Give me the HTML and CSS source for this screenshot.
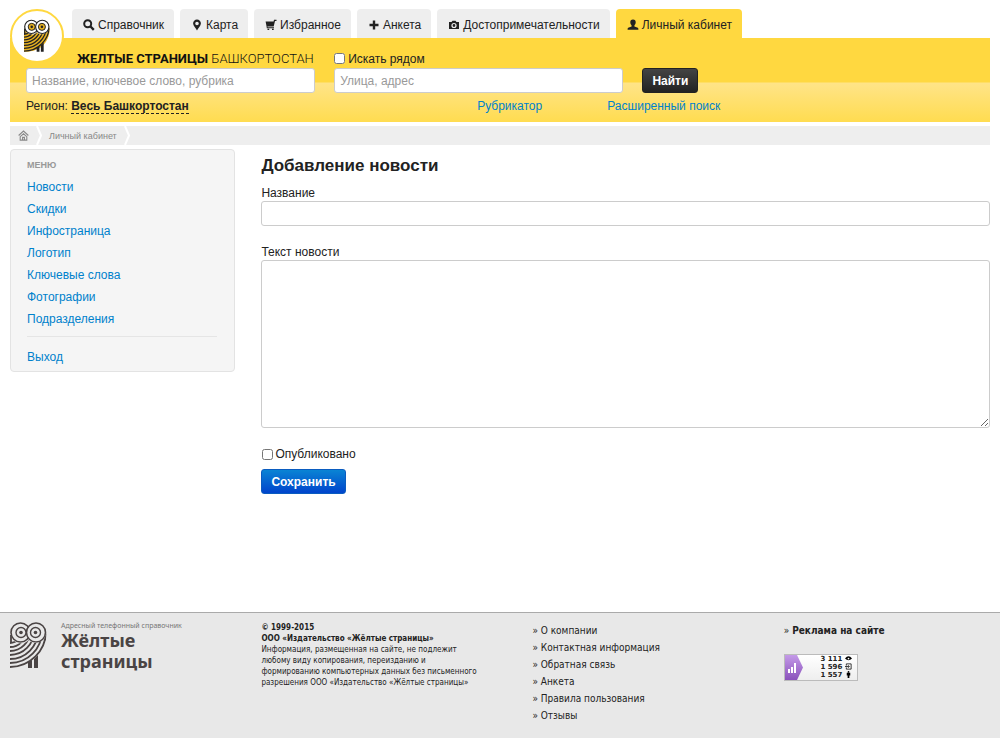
FILE: index.html
```html
<!DOCTYPE html>
<html lang="ru">
<head>
<meta charset="utf-8">
<meta name="viewport" content="width=device-width, initial-scale=1">
<title>Добавление новости — Жёлтые страницы</title>
<link rel="stylesheet" href="styles.css">
</head>
<body>
<svg class="defs" aria-hidden="true">
  <defs>
    <clipPath id="owl-body"><path d="M0 13C3 22 14 24 18.500 18C24 24 34 21 36.500 11C37 29 27 46 0 47Z"/></clipPath>
    <symbol id="owl" viewBox="0 0 37 47">
      <path class="owl-fill" d="M0 13C3 22 14 24 18.500 18C24 24 34 21 36.500 11C37 29 27 46 0 46Z"/>
      <path class="owl-leg" d="M18 40l4-2v8h-4zM24 37l4-4v13h-4z"/>
      <g class="owl-line" clip-path="url(#owl-body)">
        <circle cx="0" cy="9" r="12"/><circle cx="0" cy="9" r="16"/><circle cx="0" cy="9" r="20"/>
        <circle cx="0" cy="9" r="24"/><circle cx="0" cy="9" r="28"/>
        <circle cx="0" cy="9" r="32"/><circle cx="0" cy="9" r="36"/>
      </g>
      <path class="owl-line" d="M1 13V21"/>
      <g class="owl-eye"><circle cx="10.500" cy="10.500" r="9.500"/><circle cx="26" cy="10.500" r="9.500"/></g>
      <g class="owl-iris"><circle cx="11" cy="10.500" r="5"/><circle cx="25.500" cy="10.500" r="5"/></g>
      <g class="owl-pupil"><circle cx="11" cy="10.500" r="1.800"/><circle cx="25.500" cy="10.500" r="1.800"/></g>
    </symbol>
  </defs>
</svg>

<div class="page">
  <header class="header">
    <a class="badge" href="#" aria-label="Жёлтые страницы"><svg class="owl owl-color"><use href="#owl"/></svg></a>
    <nav class="tabs">
      <a class="tab" href="#"><svg class="icon" viewBox="0 0 12 12"><circle cx="4.700" cy="4.700" r="3.500" fill="none" stroke="currentColor" stroke-width="2"/><path d="M7.500 7.500l3.300 3.300" stroke="currentColor" stroke-width="2.400"/></svg>Справочник</a>
      <a class="tab" href="#"><svg class="icon" viewBox="0 0 12 12"><path fill="currentColor" fill-rule="evenodd" d="M6 .5a3.900 3.900 0 0 0-3.900 4C2.100 7 5 9 6 11.500 7 9 9.900 7 9.900 4.500A3.900 3.900 0 0 0 6 .5zm0 2.200a1.800 1.800 0 1 1 0 3.600A1.800 1.800 0 0 1 6 2.700z"/></svg>Карта</a>
      <a class="tab" href="#"><svg class="icon" viewBox="0 0 12 12"><path fill="currentColor" d="M11.500.8v1.100H10L8.700 7.400H2.400L2.600 8.200H9v1H1.800L1.500 7 .6 2.400h8L9 .8zM2.500 9.800h1.700V11H2.500zM7 9.800h1.700V11H7z"/></svg>Избранное</a>
      <a class="tab" href="#"><svg class="icon" viewBox="0 0 12 12"><path d="M6 1.500v9M1.500 6h9" stroke="currentColor" stroke-width="2.400"/></svg>Анкета</a>
      <a class="tab" href="#"><svg class="icon" viewBox="0 0 12 12"><path fill="currentColor" fill-rule="evenodd" d="M1 3h2.500l1-1.300h3L8.500 3H11v7H1zm5 .9a2.600 2.600 0 1 0 0 5.200 2.600 2.600 0 0 0 0-5.200zm0 1.200a1.400 1.400 0 1 1 0 2.800 1.400 1.400 0 0 1 0-2.800z"/></svg>Достопримечательности</a>
      <a class="tab tab-active" href="#"><svg class="icon" viewBox="0 0 12 12"><path fill="currentColor" d="M6 .6c1.900 0 2.800 1.200 2.700 2.900-.1 1.300-.7 2.200-1.300 2.900v1l3.400 1.300c.5.300.6 1 .6 2H.6c0-1 .1-1.700.6-2l3.400-1.300v-1C4 5.700 3.400 4.800 3.300 3.500 3.200 1.800 4.100.6 6 .6z"/></svg>Личный кабинет</a>
    </nav>
    <form class="search">
      <div class="search-grid">
        <div class="brand"><b>ЖЕЛТЫЕ СТРАНИЦЫ</b> БАШКОРТОСТАН</div>
        <label class="near"><input class="check" type="checkbox">Искать рядом</label>
        <span></span>
        <input class="field" type="text" aria-label="Что искать" placeholder="Название, ключевое слово, рубрика">
        <input class="field" type="text" aria-label="Где искать" placeholder="Улица, адрес">
        <button class="btn btn-dark" type="submit">Найти</button>
      </div>
      <div class="search-links">
        <span>Регион: <a class="region" href="#">Весь Башкортостан</a></span>
        <a href="#">Рубрикатор</a>
        <a href="#">Расширенный поиск</a>
      </div>
    </form>
  </header>

  <nav class="crumbs" aria-label="Путь">
    <a class="crumb crumb-home" href="#" aria-label="Главная"><svg class="icon-home" viewBox="0 0 12 12"><path d="M.7 6L6 1.200 11.300 6M2.400 7.300V11h7.200V7.300L6 4.200zM5 11V8h2v3" fill="none" stroke="currentColor" stroke-width="1.200"/></svg></a>
    <svg class="sep" viewBox="0 0 6 19"><path d="M1 0l4 9.500L1 19" fill="none" stroke="#fff" stroke-width="2"/></svg>
    <a class="crumb" href="#">Личный кабинет</a>
    <svg class="sep" viewBox="0 0 6 19"><path d="M1 0l4 9.500L1 19" fill="none" stroke="#fff" stroke-width="2"/></svg>
  </nav>

  <div class="columns">
    <nav class="sidebar">
      <h2 class="sidebar-title">Меню</h2>
      <ul class="menu">
        <li><a href="#">Новости</a></li>
        <li><a href="#">Скидки</a></li>
        <li><a href="#">Инфостраница</a></li>
        <li><a href="#">Логотип</a></li>
        <li><a href="#">Ключевые слова</a></li>
        <li><a href="#">Фотографии</a></li>
        <li><a href="#">Подразделения</a></li>
        <li class="divider"><a href="#">Выход</a></li>
      </ul>
    </nav>
    <main class="main">
      <h1 class="title">Добавление новости</h1>
      <form>
        <label class="label" for="name">Название</label>
        <input class="field" id="name" type="text">
        <label class="label label-next" for="text">Текст новости</label>
        <textarea class="field area" id="text"></textarea>
        <label class="publish"><input class="check" type="checkbox">Опубликовано</label>
        <button class="btn btn-blue" type="submit">Сохранить</button>
      </form>
    </main>
  </div>
</div>

<footer class="footer">
  <div class="footer-logo">
    <svg class="owl owl-gray"><use href="#owl"/></svg>
    <div>
      <div class="tagline">Адресный телефонный справочник</div>
      <div class="logotype">Жёлтые<br>страницы</div>
    </div>
  </div>
  <div class="legal">
    <b>© 1999-2015<br>ООО «Издательство «Жёлтые страницы»</b><br>
    Информация, размещенная на сайте, не подлежит<br>любому виду копирования, переизданию и<br>формированию компьютерных данных без письменного<br>разрешения ООО «Издательство «Жёлтые страницы»
  </div>
  <ul class="footer-links">
    <li><a href="#">О компании</a></li>
    <li><a href="#">Контактная информация</a></li>
    <li><a href="#">Обратная связь</a></li>
    <li><a href="#">Анкета</a></li>
    <li><a href="#">Правила пользования</a></li>
    <li><a href="#">Отзывы</a></li>
  </ul>
  <div class="ads">
    <ul class="footer-links"><li><b><a href="#">Реклама на сайте</a></b></li></ul>
    <div class="counter">
      <svg class="counter-mark" viewBox="0 0 18 25"><defs><linearGradient id="violet" x2="0" y2="1"><stop offset="0" stop-color="#c49ae8"/><stop offset="1" stop-color="#8a52bb"/></linearGradient></defs><path d="M0 0h12l6 12.500L12 25H0z" fill="url(#violet)"/><path d="M3 14h2v4H3zM6 12h2v6H6zM9 8h2v10H9z" fill="#fff"/></svg>
      <div class="counter-rows">
        <span>3 111 <svg class="mini" viewBox="0 0 8 8"><path d="M0 4Q4-1 8 4 4 8 0 4z"/><circle cx="4" cy="4" r="1" fill="#fff"/></svg></span>
        <span>1 596 <svg class="mini" viewBox="0 0 8 8"><path d="M1.500 3V1h5.500v6H1.500V5M0 4h4.500M3.500 2.500L5 4 3.500 5.500" fill="none" stroke="#222"/></svg></span>
        <span>1 557 <svg class="mini" viewBox="0 0 8 8"><circle cx="4" cy="1" r="1"/><path d="M2 2h4v3H5v3H3V5H2z"/></svg></span>
      </div>
    </div>
  </div>
</footer>
</body>
</html>
```
FILE: styles.css
```css
* { box-sizing: border-box; }

body {
  margin: 0;
  min-height: 100vh;
  display: flex;
  flex-direction: column;
  background: #fff;
  color: #222;
  font: 12px/18px "Liberation Sans", Arial, sans-serif;
}

a { color: #0081cc; text-decoration: none; }
ul { margin: 0; padding: 0; list-style: none; }
.defs { position: absolute; width: 0; height: 0; }

.page { flex: 1; padding: 9px 10px 20px; }

/* Header */
.header { position: relative; }

.badge {
  position: absolute;
  top: 0;
  left: 0;
  z-index: 1;
  width: 54px;
  height: 54px;
  display: flex;
  align-items: center;
  justify-content: center;
  border: 2px solid #ffd840;
  border-radius: 50%;
  background: #fff;
}

.tabs { display: flex; gap: 6px; padding-left: 62px; }

.tab {
  display: flex;
  align-items: center;
  gap: 3px;
  height: 29px;
  padding: 2px 10px 0 11px;
  border-radius: 4px 4px 0 0;
  background: #eee;
  color: #222;
  white-space: nowrap;
}
.tab-active { background: #ffd840; }
.icon { width: 12px; height: 12px; }

.search {
  padding: 11px 0 7px 16px;
  background: linear-gradient(#ffd840 0 44px, #ffe488 45px, #ffdc50);
}
.search-grid {
  display: grid;
  grid-template-columns: 30% 30% auto;
  justify-content: start;
  column-gap: 19px;
}
.brand {
  padding-left: 51px;
  font: 300 13px/19px Roboto, sans-serif;
  white-space: nowrap;
  color: #111;
}
.brand b { font-weight: 700; }
.near { display: flex; align-items: center; gap: 3px; }
.check { width: 11px; height: 11px; margin: 0; }

.search-links {
  display: grid;
  grid-template-columns: 46.8% 13.5% auto;
  justify-content: start;
  margin-top: 4px;
}
.region { border-bottom: 1px dashed #222; color: #222; font-weight: bold; }

.field {
  display: block;
  width: 100%;
  height: 25px;
  padding: 3px 5px;
  border: 1px solid #ccc;
  border-radius: 3px;
  background: #fff;
  color: #444;
  font: inherit;
}
.field::placeholder { color: #999; opacity: 1; }

.btn {
  height: 25px;
  padding: 0 9px;
  border: 1px solid;
  border-radius: 3px;
  color: #fff;
  font: bold 12px/18px "Liberation Sans", Arial, sans-serif;
}
.btn-dark { border-color: #222; background: linear-gradient(#444, #222); }
.btn-blue { border-color: #0a5cc0; background: linear-gradient(#0a84d4, #0044cc); }

/* Breadcrumbs */
.crumbs {
  display: flex;
  align-items: center;
  gap: 7px;
  height: 19px;
  margin-top: 4px;
  padding-left: 8px;
  background: #eee;
  font-size: 9px;
}
.crumb { color: #888; }
.crumb-home { display: flex; }
.icon-home { width: 11px; height: 11px; }
.sep { width: 6px; height: 19px; }

/* Columns */
.columns {
  display: grid;
  grid-template-columns: 23% 1fr;
  column-gap: 26px;
  align-items: start;
  margin-top: 4px;
}
.sidebar {
  padding: 6px 17px 3px 16px;
  border: 1px solid #e3e3e3;
  border-radius: 4px;
  background: #f5f5f5;
}
.sidebar-title {
  margin: 0;
  color: #999;
  font-size: 9px;
  line-height: 18px;
  text-transform: uppercase;
}
.menu { padding-top: 2px; line-height: 22px; }
.divider { margin-top: 6px; padding-top: 9px; border-top: 1px solid #e5e5e5; }

.title { margin: 5px 0 8px; font-size: 17px; line-height: 24px; }
.label { display: block; line-height: 15px; }
.label-next { margin-top: 19px; }
.area { height: 168px; resize: vertical; }
.publish { display: flex; align-items: center; gap: 2px; margin: 17px 0 6px; padding-left: 1px; }

/* Footer */
.footer {
  display: grid;
  grid-template-columns: 23% 25% 23% 1fr;
  column-gap: 26px;
  padding: 9px 10px 14px;
  border-top: 1px solid #aaa;
  background: #e8e8e8;
  font: 10px/17px "DejaVu Sans Condensed", "DejaVu Sans", sans-serif;
}
.footer-logo { display: flex; gap: 14px; }
.tagline { color: #777; font: 7px/8px "Noto Sans", sans-serif; white-space: nowrap; }
.logotype { color: #4a4444; font: bold 18px/21px "Noto Sans", sans-serif; }
.legal { font-size: 8px; line-height: 11px; white-space: nowrap; }
.footer-links a { color: #222; }
.footer-links li::before { content: "» "; }

.counter {
  display: flex;
  width: 74px;
  margin-top: 15px;
  border: 1px solid #bbb;
  background: linear-gradient(#fff, #eee);
}
.counter-mark { width: 18px; height: 25px; }
.counter-rows { flex: 1; padding-right: 5px; text-align: right; font: bold 7px/8px "DejaVu Sans", sans-serif; }
.counter-rows span { display: block; }
.mini { width: 7px; height: 7px; vertical-align: -1px; }

/* Owl emblem */
.owl { width: 37px; height: 47px; }
.owl-line { fill: none; stroke: var(--ink); stroke-width: 1.8; }
.owl-leg { fill: var(--ink); }
.owl-fill { fill: var(--body); }
.owl-eye { fill: var(--eye); stroke: var(--ink); stroke-width: 1.6; }
.owl-iris { fill: var(--iris); stroke: var(--ink); stroke-width: 1.4; }
.owl-pupil { fill: var(--ink); }
.owl-color { --ink: #222; --body: #e5b020; --eye: #fff; --iris: #e5b020; width: 26px; height: 34px; }
.owl-gray { --ink: #4a4444; --body: #e8e8e8; --eye: #e8e8e8; --iris: #e8e8e8; }
```
